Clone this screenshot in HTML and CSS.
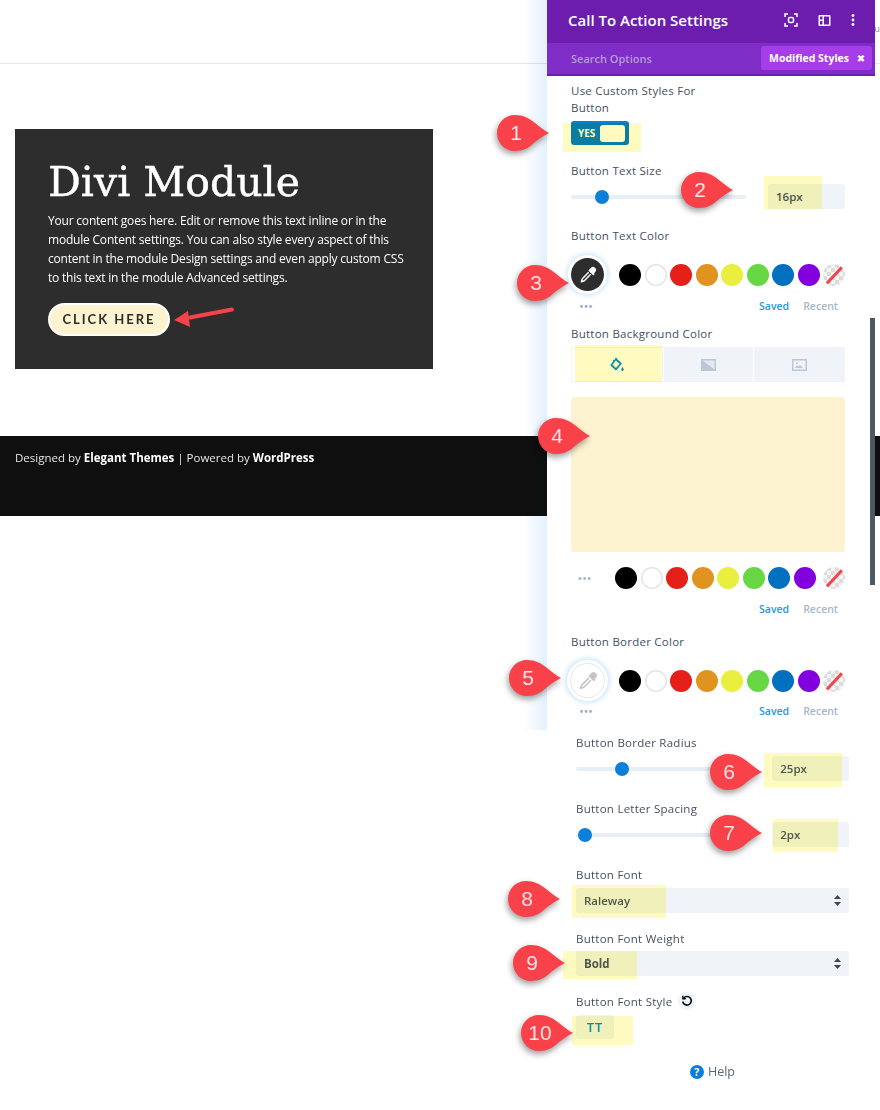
FILE: index.html
```html
<!DOCTYPE html>
<html lang="en">
<head>
    <meta charset="UTF-8">
    <meta name="viewport" content="width=device-width, initial-scale=1.0">
    <title>Call To Action Settings</title>
    <link rel="stylesheet" href="styles.css">
</head>
<body>
<svg class="defs" width="0" height="0">
    <symbol id="pin" viewBox="0 0 52 36">
        <path d="M18 0C26 0 32 3 38 8C43 12 48 16 52 18C48 20 43 23 38 27C32 33 26 36 18 36C8 36 0 28 0 18C0 8 8 0 18 0Z"/>
    </symbol>
    <symbol id="dropper" viewBox="0 0 24 24">
        <path d="M14.2 4.800l1.700-1.700a2.900 2.900 0 0 1 4.100 0l.9.900a2.900 2.900 0 0 1 0 4.100l-1.700 1.700 1 1-1.800 1.800-6-6 1.800-1.800z" fill="currentColor"/>
        <path d="M12.800 8.800L5.200 16.400 4 20l3.600-1.200 7.600-7.600" fill="none" stroke="currentColor" stroke-width="1.800" stroke-linejoin="round"/>
    </symbol>
</svg>

<header class="site-header"><span class="nav-link">u</span></header>

<section class="module">
    <h1>Divi Module</h1>
    <p>Your content goes here. Edit or remove this text inline or in the module Content settings. You can also style every aspect of this content in the module Design settings and even apply custom CSS to this text in the module Advanced settings.</p>
    <a class="cta-button">CLICK HERE</a>
    <svg class="cta-arrow" width="64" height="24" viewBox="0 0 64 24">
        <path d="M58 3.500L16 11.500" stroke="#f6424a" stroke-width="4" stroke-linecap="round" fill="none"/>
        <path d="M0 14L14 5 16 21Z" fill="#f6424a"/>
    </svg>
</section>

<footer class="site-footer">
    Designed by <b>Elegant Themes</b> | Powered by <b>WordPress</b>
</footer>

<aside class="panel">
    <div class="panel-top">
        <div class="panel-head">
            <h2>Call To Action Settings</h2>
            <div class="head-icons">
                <svg width="14" height="14" viewBox="0 0 14 14" fill="none" stroke="#fff" stroke-width="1.500">
                    <path d="M1 4V1h3M10 1h3v3M13 10v3h-3M4 13H1v-3"/>
                    <rect x="4.500" y="4.500" width="5" height="5" rx="1.500"/>
                </svg>
                <svg width="13" height="13" viewBox="0 0 13 13" fill="#fff">
                    <path d="M1.500 1h10a1 1 0 0 1 1 1v9a1 1 0 0 1-1 1h-10a1 1 0 0 1-1-1V2a1 1 0 0 1 1-1zM2 2.500v3h2.500v-3zM2 7v3.500h2.500V7zM6 2.500v8h5v-8z"/>
                </svg>
                <svg width="4" height="12" viewBox="0 0 4 12" fill="#fff">
                    <circle cx="2" cy="1.500" r="1.400"/><circle cx="2" cy="6" r="1.400"/><circle cx="2" cy="10.500" r="1.400"/>
                </svg>
            </div>
        </div>
        <div class="panel-search">
            <span class="search-text">Search Options</span>
            <span class="filter-chip">Modified Styles <i>✖</i></span>
        </div>

        <div class="panel-body">
            <label class="label wrap">Use Custom Styles For Button</label>
            <div class="toggle"><b>YES</b><span></span></div>

            <label class="label size-label">Button Text Size</label>
            <div class="range-row">
                <div class="track"><span class="knob knob-size"></span></div>
                <div class="value">16px</div>
            </div>

            <label class="label color-label">Button Text Color</label>
            <div class="color-row">
                <div class="picker dark"><svg width="20" height="20"><use href="#dropper"/></svg></div>
                <div class="swatches">
                    <i class="black"></i><i class="white"></i><i class="red"></i><i class="orange"></i><i class="yellow"></i><i class="green"></i><i class="blue"></i><i class="purple"></i><i class="none"></i>
                </div>
            </div>
            <div class="palette-foot"><span class="dots">•••</span><span class="saved">Saved</span><span class="recent">Recent</span></div>

            <label class="label bg-label">Button Background Color</label>
            <div class="bg-tabs">
                <div class="bg-tab">
                    <svg width="16" height="16" viewBox="0 0 16 16" fill="#0c8fdb">
                        <path d="M6 1.500l1.200-.9 1 1.300L13 6.600 8 12.500a1.500 1.500 0 0 1-2.200.1L2 9a1.500 1.500 0 0 1 0-2.100l2.300-2.600L3.800 3.200l1.200-.8.600 1zM5.300 5.500L3.500 7.800l3.400 3.300 3.800-4.300-3.900-3.400z"/>
                        <path d="M13.500 10c.7 1.100 1.300 1.900 1.300 2.600a1.300 1.300 0 0 1-2.600 0c0-.7.600-1.500 1.300-2.600z"/>
                    </svg>
                </div>
                <div class="bg-tab">
                    <svg width="15" height="12" viewBox="0 0 15 12">
                        <rect width="15" height="12" fill="#bcc7d5"/>
                        <path d="M1.500 1.500h12v9z" fill="#e4e9f0"/>
                    </svg>
                </div>
                <div class="bg-tab">
                    <svg width="15" height="12" viewBox="0 0 15 12" fill="#bcc7d5">
                        <path d="M0 0h15v12H0zM1.500 1.500v9h12v-9z"/>
                        <path d="M3 9l2-3 1.500 1.500L8 6l3 3zM4 3.500h1.500V5H4z"/>
                    </svg>
                </div>
            </div>
            <div class="bg-preview"></div>
            <div class="swatches wide">
                <span class="dots">•••</span>
                <i class="black"></i><i class="white"></i><i class="red"></i><i class="orange"></i><i class="yellow"></i><i class="green"></i><i class="blue"></i><i class="purple"></i><i class="none"></i>
            </div>
            <div class="palette-foot plain"><span class="saved">Saved</span><span class="recent">Recent</span></div>

            <label class="label border-label">Button Border Color</label>
            <div class="color-row border-row">
                <div class="picker light"><svg width="22" height="22"><use href="#dropper"/></svg></div>
                <div class="swatches">
                    <i class="black"></i><i class="white"></i><i class="red"></i><i class="orange"></i><i class="yellow"></i><i class="green"></i><i class="blue"></i><i class="purple"></i><i class="none"></i>
                </div>
            </div>
            <div class="palette-foot"><span class="dots">•••</span><span class="saved">Saved</span><span class="recent">Recent</span></div>
        </div>
        <div class="scrollbar"></div>
    </div>

    <div class="panel-lower">
        <label class="label">Button Border Radius</label>
        <div class="range-row">
            <div class="track"><span class="knob knob-radius"></span></div>
            <div class="value">25px</div>
        </div>

        <label class="label next">Button Letter Spacing</label>
        <div class="range-row">
            <div class="track"><span class="knob knob-spacing"></span></div>
            <div class="value">2px</div>
        </div>

        <label class="label next">Button Font</label>
        <div class="select">Raleway
            <svg width="7" height="11" viewBox="0 0 7 11" fill="#3c4450"><path d="M3.500 0L7 4H0zM3.500 11L0 7h7z"/></svg>
        </div>

        <label class="label weight-label">Button Font Weight</label>
        <div class="select heavy">Bold
            <svg width="7" height="11" viewBox="0 0 7 11" fill="#3c4450"><path d="M3.500 0L7 4H0zM3.500 11L0 7h7z"/></svg>
        </div>

        <div class="style-label">
            <label class="label">Button Font Style</label>
            <span class="reset">
                <svg width="12" height="12" viewBox="0 0 12 12" fill="none" stroke="#111" stroke-width="1.600">
                    <path d="M2.500 3.200A4.300 4.300 0 1 1 1.700 6.500"/>
                    <path d="M1.800 .8v3h3" stroke-width="1.400"/>
                </svg>
            </span>
        </div>
        <div class="style-btn">TT</div>

        <div class="help">
            <span class="help-icon">?</span>Help
        </div>
    </div>
</aside>

<!-- yellow markers from the annotated screenshot -->
<div class="mark mark-toggle"></div>
<div class="mark mark-size"></div>
<div class="mark mark-tab"></div>
<div class="mark mark-radius"></div>
<div class="mark mark-spacing"></div>
<div class="mark mark-font"></div>
<div class="mark mark-weight"></div>
<div class="mark mark-style"></div>

<div class="callout c1"><svg width="52" height="36"><use href="#pin"/></svg><span>1</span></div>
<div class="callout c2"><svg width="52" height="36"><use href="#pin"/></svg><span>2</span></div>
<div class="callout c3"><svg width="52" height="36"><use href="#pin"/></svg><span>3</span></div>
<div class="callout c4"><svg width="52" height="36"><use href="#pin"/></svg><span>4</span></div>
<div class="callout c5"><svg width="52" height="36"><use href="#pin"/></svg><span>5</span></div>
<div class="callout c6"><svg width="52" height="36"><use href="#pin"/></svg><span>6</span></div>
<div class="callout c7"><svg width="52" height="36"><use href="#pin"/></svg><span>7</span></div>
<div class="callout c8"><svg width="52" height="36"><use href="#pin"/></svg><span>8</span></div>
<div class="callout c9"><svg width="52" height="36"><use href="#pin"/></svg><span>9</span></div>
<div class="callout c10"><svg width="52" height="36"><use href="#pin"/></svg><span>10</span></div>
</body>
</html>
```

FILE: styles.css
```css
* {
    box-sizing: border-box;
    margin: 0;
    padding: 0;
}

html, body {
    height: 1110px;
    overflow: hidden;
}

body {
    position: relative;
    background-color: #fff;
    font-family: 'Open Sans', Arial, sans-serif;
    color: #4c5866;
}

.defs {
    position: absolute;
}

.site-header {
    height: 64px;
    border-bottom: 1px solid #e6e6e6;
    display: flex;
    justify-content: flex-end;
    padding-top: 23px;
}

.nav-link {
    font-size: 9px;
    line-height: 12px;
    color: #888;
}

.module {
    position: relative;
    width: 418px;
    height: 240px;
    margin: 65px 0 0 15px;
    padding: 29px 27px 28px 33px;
    background-color: #2d2d2d;
    color: #fff;
}

.module h1 {
    font-family: 'DejaVu Serif', serif;
    font-weight: 400;
    font-size: 41px;
    line-height: 48px;
    -webkit-text-stroke: .4px #fff;
}

.module p {
    margin-top: 5px;
    font-size: 12px;
    letter-spacing: -.2px;
    line-height: 19px;
}

.cta-button {
    display: inline-block;
    margin-top: 16px;
    width: 122px;
    height: 33px;
    line-height: 29px;
    text-align: center;
    background-color: #fef3d0;
    border: 2px solid #fff;
    border-radius: 17px;
    color: #2d2d2d;
    font-family: Lato, sans-serif;
    font-weight: 700;
    font-size: 13px;
    letter-spacing: 2px;
}

.cta-arrow {
    position: absolute;
    left: 159px;
    top: 177px;
}

.site-footer {
    height: 80px;
    margin-top: 67px;
    padding: 13px 15px;
    background-color: #0f0f0f;
    color: #e6e6e6;
    font-size: 11.5px;
    line-height: 18px;
}

.site-footer b {
    color: #fff;
}

/* settings panel sits over the page */
.panel {
    position: absolute;
    left: 547px;
    top: 0;
    width: 328px;
}

/* multiply so the glow only tints the white page, not the footer */
.panel::before {
    content: "";
    position: absolute;
    left: -24px;
    top: 0;
    width: 24px;
    height: 730px;
    background: linear-gradient(to right, #fff, #e2f1fd);
    mix-blend-mode: multiply;
}

.panel-top {
    position: relative;
    height: 730px;
    background-color: #fff;
}

.panel-head {
    display: flex;
    align-items: center;
    justify-content: space-between;
    height: 43px;
    padding: 0 20px 3px 21px;
    background-color: #6c1dad;
}

.panel-head h2 {
    font-size: 15px;
    font-weight: 600;
    color: #fff;
}

.head-icons {
    display: flex;
    align-items: center;
    gap: 20px;
}

.panel-search {
    display: flex;
    align-items: center;
    justify-content: space-between;
    height: 33px;
    padding: 0 3px 1px 24px;
    background-color: #7e2ec6;
    border-bottom: 2px solid #6c1dad;
}

.search-text {
    font-size: 11px;
    font-weight: 600;
    color: #b59bdc;
}

.filter-chip {
    width: 111px;
    height: 24px;
    padding-left: 8px;
    line-height: 24px;
    border-radius: 3px;
    background-color: #a73ce9;
    color: #fff;
    font-size: 10.5px;
    font-weight: 700;
}

.filter-chip i {
    margin-left: 5px;
    font-style: normal;
    font-size: 10px;
    font-family: 'DejaVu Sans', sans-serif;
}

.panel-body {
    padding: 6px 30px 0 24px;
}

.label {
    display: block;
    font-size: 11.5px;
    font-weight: 500;
    line-height: 17px;
    letter-spacing: .25px;
    color: #46505d;
}

.label.wrap {
    width: 140px;
}

.toggle {
    display: flex;
    align-items: center;
    justify-content: space-between;
    width: 58px;
    height: 24px;
    margin-top: 5px;
    padding: 0 4px 0 7px;
    border-radius: 3px;
    background-color: #0b7fd5;
    color: #fff;
    font-size: 10px;
}

.toggle span {
    width: 25px;
    height: 17px;
    border-radius: 3px;
    background-color: #fff;
}

.size-label {
    margin-top: 17px;
}

.range-row {
    display: flex;
    align-items: center;
    gap: 22px;
    margin-top: 5px;
}

.track {
    position: relative;
    width: 175px;
    height: 4px;
    border-radius: 2px;
    background-color: #e7eef6;
}

.knob {
    position: absolute;
    top: -5px;
    width: 14px;
    height: 14px;
    border-radius: 50%;
    background-color: #0c7fd8;
}

.knob-size { left: 24px; }
.knob-radius { left: 39px; }
.knob-spacing { left: 2px; }

.value {
    width: 77px;
    height: 25px;
    padding-left: 8px;
    line-height: 25px;
    border-radius: 3px;
    background-color: #f0f4f9;
    font-size: 11.5px;
    font-weight: 600;
    color: #4c5866;
}

.color-label {
    margin-top: 18px;
}

.color-row {
    display: flex;
    align-items: center;
    margin-top: 14px;
}

.picker {
    display: flex;
    align-items: center;
    justify-content: center;
    width: 33px;
    height: 33px;
    border-radius: 50%;
    flex-shrink: 0;
}

.picker.dark {
    background-color: #2d2d2d;
    color: #fff;
    box-shadow: 0 0 0 3px #fff, 0 0 4px 5px #d3e9fc;
}

.picker.light {
    background-color: #fff;
    color: #c4c4c4;
    box-shadow: 0 0 0 1px #e8e8e8, 0 0 0 4px #fff, 0 0 5px 6px #cfe6fb;
}

.swatches {
    display: flex;
    align-items: center;
    justify-content: space-between;
    flex: 1;
    margin-left: 15px;
}

.swatches i {
    position: relative;
    width: 22px;
    height: 22px;
    border-radius: 50%;
    overflow: hidden;
}

.black { background-color: #000; }
.white { background-color: #fff; box-shadow: inset 0 0 0 1.500px #e5e5e5; }
.red { background-color: #e5201a; }
.orange { background-color: #e0941f; }
.yellow { background-color: #e9ee3f; }
.green { background-color: #68d744; }
.blue { background-color: #0070bf; }
.purple { background-color: #8300de; }

.swatches .none {
    background: repeating-conic-gradient(#dcdcdc 0 25%, #f5f5f5 0 50%) 0 0 / 8px 8px;
}

.none::after {
    content: "";
    position: absolute;
    left: -2px;
    top: 10px;
    width: 26px;
    height: 2.500px;
    background-color: #f6424a;
    transform: rotate(-47deg);
}

.palette-foot {
    display: flex;
    align-items: center;
    height: 14px;
    margin-top: 8px;
    font-size: 10.5px;
    font-weight: 600;
}

.palette-foot .dots {
    width: 31px;
    text-align: center;
}

.dots {
    font-family: 'Liberation Sans', Arial, sans-serif;
    font-size: 10px;
    letter-spacing: 1px;
    color: #a3b1c4;
}

.saved {
    margin-left: auto;
    color: #2b96e3;
}

.recent {
    margin-left: 14px;
    margin-right: 7px;
    color: #a8b6c8;
}

.bg-label {
    margin-top: 12px;
}

.bg-tabs {
    display: grid;
    grid-template-columns: 92px 89px 91px;
    gap: 1px;
    margin-top: 5px;
    height: 35px;
}

.bg-tab {
    display: flex;
    align-items: center;
    justify-content: center;
    background-color: #f0f4f9;
}

.bg-tab:first-child {
    background-color: #fff;
    border: 1px solid #f0f4f9;
}

.bg-preview {
    height: 155px;
    margin-top: 15px;
    border-radius: 3px;
    background-color: #fef3d0;
}

.swatches.wide {
    margin: 15px 0 0;
    padding-left: 44px;
    position: relative;
    justify-content: flex-start;
    gap: 3.500px;
}

.swatches.wide .dots {
    position: absolute;
    left: 0;
    width: 28px;
    text-align: center;
}

.swatches.wide .none {
    margin-left: 4px;
}

.palette-foot.plain {
    margin-top: 13px;
}

.border-label {
    margin-top: 17px;
}

.border-row {
    margin-top: 14px;
}

.border-row + .palette-foot {
    margin-top: 7px;
}

.scrollbar {
    position: absolute;
    top: 318px;
    right: 0;
    width: 5px;
    height: 267px;
    background-color: #4c5866;
}

.panel-lower {
    padding: 4px 26px 0 29px;
}

.label.next {
    margin-top: 19px;
}

.weight-label {
    margin-top: 17px;
}

.select {
    display: flex;
    align-items: center;
    justify-content: space-between;
    height: 25px;
    margin-top: 5px;
    padding: 0 8px;
    border-radius: 3px;
    background-color: #f0f4f9;
    font-size: 11.5px;
    font-weight: 600;
}

.select.heavy {
    margin-top: 4px;
    font-weight: 700;
}

.style-label {
    display: flex;
    align-items: center;
    gap: 6px;
    margin-top: 16px;
}

.reset {
    display: flex;
    align-items: center;
    justify-content: center;
    width: 18px;
    height: 18px;
    border-radius: 50%;
    background-color: #f0f4f9;
}

.style-btn {
    width: 38px;
    height: 24px;
    margin-top: 5px;
    line-height: 24px;
    text-align: center;
    border-radius: 3px;
    background-color: #f0f4f9;
    color: #0c8fdb;
    font-size: 13px;
    font-weight: 600;
    letter-spacing: 1px;
}

.help {
    display: flex;
    align-items: center;
    justify-content: center;
    gap: 4px;
    margin-top: 24px;
    font-size: 12.5px;
    line-height: 18px;
    color: #5b6776;
}

.help-icon {
    width: 14px;
    height: 14px;
    border-radius: 50%;
    background-color: #0c7fd8;
    color: #fff;
    font-size: 11px;
    font-weight: 700;
    line-height: 14px;
    text-align: center;
}

/* yellow highlighter rectangles */
.mark {
    position: absolute;
    background-color: #fffbc0;
    mix-blend-mode: multiply;
}

.mark-toggle { left: 563px; top: 123px; width: 78px; height: 29px; }
.mark-size { left: 764px; top: 176px; width: 58px; height: 33px; }
.mark-tab { left: 575px; top: 345px; width: 87px; height: 37px; }
.mark-radius { left: 764px; top: 753px; width: 78px; height: 34px; }
.mark-spacing { left: 773px; top: 819px; width: 65px; height: 33px; }
.mark-font { left: 572px; top: 885px; width: 94px; height: 33px; }
.mark-weight { left: 563px; top: 951px; width: 74px; height: 28px; }
.mark-style { left: 572px; top: 1016px; width: 61px; height: 29px; }

/* numbered red pins */
.callout {
    position: absolute;
    width: 52px;
    height: 36px;
    fill: #f9414a;
}

.callout svg {
    display: block;
    overflow: visible;
    filter: drop-shadow(-1px 3px 3px rgba(0, 0, 0, 0.4));
}

.callout span {
    position: absolute;
    left: 0;
    top: 0;
    width: 38px;
    text-align: center;
    font-family: 'Liberation Sans', Arial, sans-serif;
    font-size: 21px;
    line-height: 36px;
    color: #fde3e3;
}

.c1 { left: 497px; top: 115px; }
.c2 { left: 681px; top: 172px; }
.c3 { left: 517px; top: 265px; }
.c4 { left: 538px; top: 418px; }
.c5 { left: 509px; top: 660px; }
.c6 { left: 710px; top: 754px; }
.c7 { left: 710px; top: 815px; }
.c8 { left: 508px; top: 881px; }
.c9 { left: 513px; top: 945px; }
.c10 { left: 521px; top: 1015px; }
```
